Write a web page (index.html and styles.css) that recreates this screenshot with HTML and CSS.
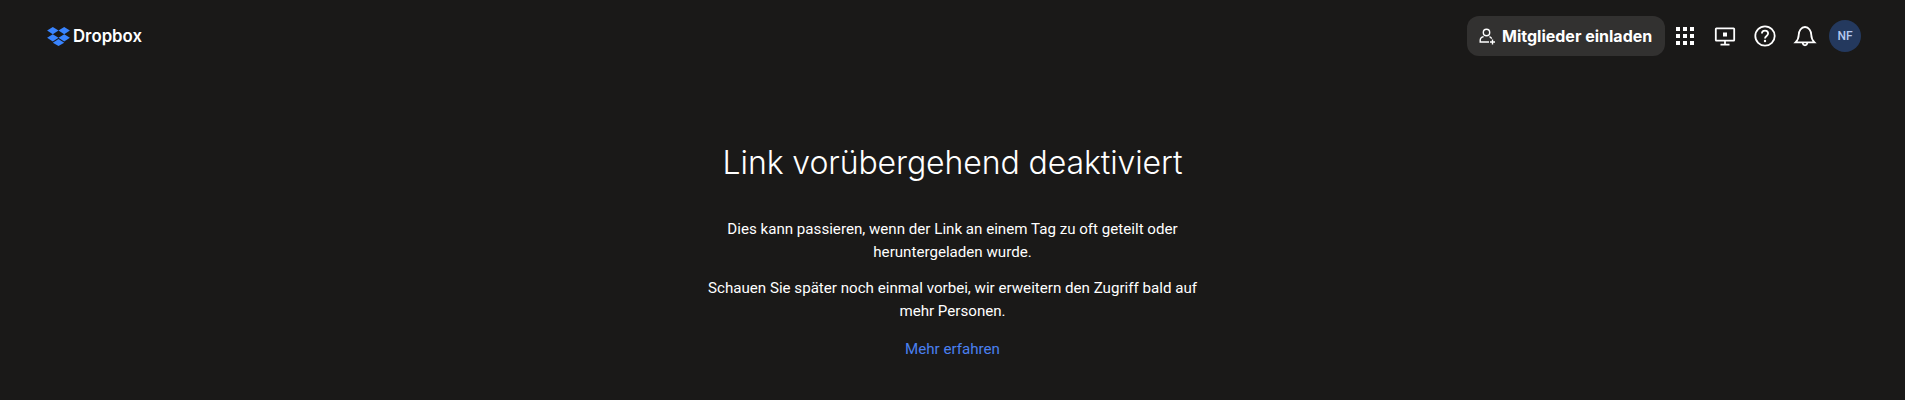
FILE: index.html
```html
<!DOCTYPE html>
<html lang="de">
<head>
  <meta charset="UTF-8" />
  <meta name="viewport" content="width=device-width, initial-scale=1.0"/>
  <title>Link vorübergehend deaktiviert - Dropbox</title>
  <link rel="stylesheet" href="styles.css">
</head>
<body>

  <!-- Kopfzeile -->
  <div class="topbar">
    <a href="#" class="logo">
      <svg class="logo-icon" viewBox="0 0 24 20" width="23" height="19" fill="#3984ff">
        <path d="M6 0 0 3.8l6 3.8 6-3.8z"/>
        <path d="M18 0l-6 3.8 6 3.8 6-3.8z"/>
        <path d="M0 11.4l6 3.8 6-3.8-6-3.8z"/>
        <path d="M18 7.6l-6 3.8 6 3.8 6-3.8z"/>
        <path d="M6 16.5l6 3.5 6-3.5-6-3.8z"/>
      </svg>
      <span>Dropbox</span>
    </a>

    <div class="actions">
      <button class="invite-button">
        <svg viewBox="0 0 20 20" width="20" height="20" fill="none" stroke="#fff" stroke-width="1.4">
          <circle cx="9.5" cy="6.5" r="3.2"/>
          <path d="M12 16H3.2v-1.6c0-2.2 1.6-3.4 3.4-3.8M12.5 10.6c1 .4 1.7 1 2.2 2"/>
          <path d="M15.5 13.5v5M13 16h5"/>
        </svg>
        Mitglieder einladen
      </button>

      <a href="#" class="icon-link">
        <svg viewBox="0 0 20 20" width="20" height="20" fill="#fff">
          <rect x="1" y="1" width="4" height="4"/><rect x="8" y="1" width="4" height="4"/><rect x="15" y="1" width="4" height="4"/>
          <rect x="1" y="8" width="4" height="4"/><rect x="8" y="8" width="4" height="4"/><rect x="15" y="8" width="4" height="4"/>
          <rect x="1" y="15" width="4" height="4"/><rect x="8" y="15" width="4" height="4"/><rect x="15" y="15" width="4" height="4"/>
        </svg>
      </a>
      <a href="#" class="icon-link">
        <svg viewBox="0 0 24 24" width="24" height="24" fill="none" stroke="#fff" stroke-width="1.8">
          <rect x="2.8" y="4.3" width="18.4" height="12.4" rx="0.6"/>
          <path d="M12 16.7v4M7.5 20.7h9"/>
          <rect x="10" y="8.5" width="4" height="4" fill="#fff" stroke="none"/>
        </svg>
      </a>
      <a href="#" class="icon-link">
        <svg viewBox="0 0 24 24" width="24" height="24" fill="none" stroke="#fff" stroke-width="1.8">
          <circle cx="12" cy="12" r="9.7"/>
          <path d="M8.9 9.6c0-1.8 1.4-3 3.1-3s3.1 1.2 3.1 2.9c0 2.5-3.1 2.4-3.1 5"/>
          <circle cx="12" cy="17" r="1.2" fill="#fff" stroke="none"/>
        </svg>
      </a>
      <a href="#" class="icon-link">
        <svg viewBox="0 0 24 24" width="24" height="24" fill="none" stroke="#fff" stroke-width="1.8">
          <path d="M2.5 18.3c1.9-1.9 3.2-3.6 3.2-7.3 0-4.2 2.6-8 6.3-8s6.3 3.8 6.3 8c0 3.7 1.3 5.4 3.2 7.3z"/>
          <path d="M9.6 18.5c.2 1.7 1.1 2.8 2.4 2.8s2.2-1.1 2.4-2.8"/>
        </svg>
      </a>
      <div class="avatar">NF</div>
    </div>
  </div>

  <!-- Hinweis -->
  <div class="notice">
    <h1>Link vorübergehend deaktiviert</h1>
    <p>Dies kann passieren, wenn der Link an einem Tag zu oft geteilt oder heruntergeladen wurde.</p>
    <p>Schauen Sie später noch einmal vorbei, wir erweitern den Zugriff bald auf mehr Personen.</p>
    <a href="#" class="more-link">Mehr erfahren</a>
  </div>

</body>
</html>
```

FILE: styles.css
```css
body {
  margin: 0;
  height: 400px;
  overflow: hidden;
  font-family: Roboto, sans-serif;
  background-color: #1a1918;
  color: white;
}

a {
  text-decoration: none;
}

.topbar {
  display: flex;
  justify-content: space-between;
  align-items: center;
  padding: 16px 44px 0 47px;
}

.logo {
  display: flex;
  align-items: center;
  gap: 3px;
  color: white;
  font-family: Inter, sans-serif;
  font-size: 16.8px;
  font-weight: 600;
}

.actions {
  display: flex;
  align-items: center;
}

.invite-button {
  display: flex;
  align-items: center;
  gap: 5px;
  height: 40px;
  width: 198px;
  padding: 0 0 0 10px;
  border: none;
  border-radius: 12px;
  background-color: #323130;
  color: white;
  font-family: Inter, sans-serif;
  font-size: 16px;
  font-weight: 700;
  white-space: nowrap;
}

.icon-link {
  display: flex;
  align-items: center;
  justify-content: center;
  width: 24px;
  height: 24px;
  margin-left: 16px;
}

.invite-button + .icon-link {
  margin-left: 8px;
}

.avatar {
  display: flex;
  align-items: center;
  justify-content: center;
  width: 32px;
  height: 32px;
  margin-left: 12px;
  border-radius: 50%;
  background-color: #24395e;
  color: #b4c8f0;
  font-size: 12px;
  font-weight: 500;
}

.notice {
  width: 500px;
  margin: 87px auto 0;
  text-align: center;
}

.notice h1 {
  margin: 0 0 35px;
  font-family: Inter, sans-serif;
  font-size: 32px;
  font-weight: 350;
  letter-spacing: -0.1px;
  line-height: 40px;
}

.notice p {
  margin: 0 0 13px;
  font-size: 15.14px;
  line-height: 23px;
}

.more-link {
  display: block;
  margin-top: 15px;
  color: #4a80f0;
  font-size: 15.14px;
  line-height: 23px;
}
```
